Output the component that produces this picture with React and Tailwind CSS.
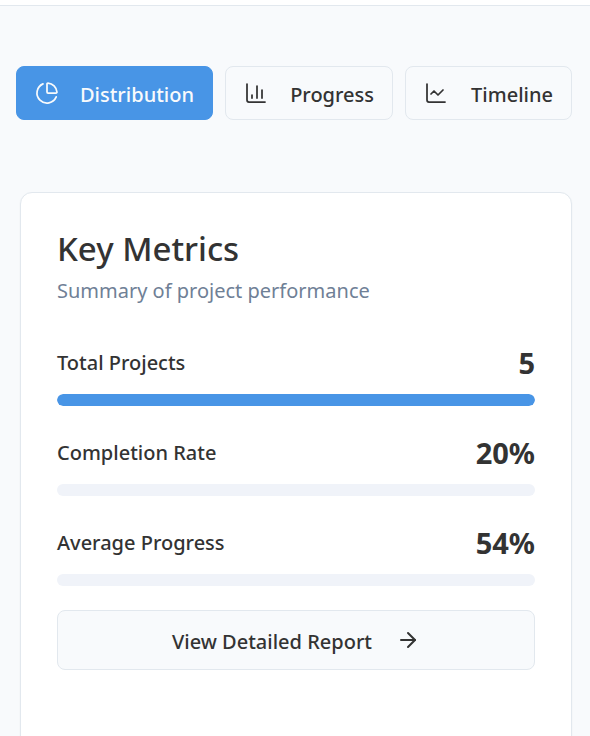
import { ArrowRight, ChartColumn, ChartLine, ChartPie } from "lucide-react";

const tabs = [
  { name: "Distribution", Icon: ChartPie, active: true },
  { name: "Progress", Icon: ChartColumn, active: false },
  { name: "Timeline", Icon: ChartLine, active: false },
];

const metrics = [
  { label: "Total Projects", value: "5", fill: 100 },
  { label: "Completion Rate", value: "20%", fill: 0 },
  { label: "Average Progress", value: "54%", fill: 0 },
];

function Tab({ name, Icon, active }) {
  const tone = active
    ? "border-[#4895e6] bg-[#4895e6] text-[#f8fafc]"
    : "border-[#e2e8ee] bg-[#f8fafc] text-[#333333]";
  return (
    <button
      type="button"
      aria-pressed={active}
      className={`flex h-[54px] items-center justify-between rounded-lg border px-[18px] text-xl font-medium ${tone}`}
    >
      <Icon size={24} strokeWidth={1.75} className="shrink-0" />
      <span className="pt-1">{name}</span>
    </button>
  );
}

function Metric({ label, value, fill }) {
  return (
    <div>
      <div className="flex h-[42px] items-center justify-between">
        <span className="text-xl font-medium">{label}</span>
        <span className="text-[29px] leading-[42px] font-bold">{value}</span>
      </div>
      <div
        role="progressbar"
        aria-label={label}
        aria-valuenow={fill}
        className="mt-[10px] h-3 overflow-hidden rounded-full bg-[#f0f3f9]"
      >
        <div className="h-full rounded-full bg-[#4895e6]" style={{ width: `${fill}%` }} />
      </div>
    </div>
  );
}

export default function App() {
  return (
    <div className="h-screen overflow-hidden bg-[#f8fafc] font-['Noto_Sans','Open_Sans',sans-serif] text-[#333333]">
      <header className="h-1.5 border-b border-[#e2e8ee] bg-white" />
      <main className="pt-[60px] pr-[18px] pl-4">
        <nav aria-label="Charts" className="grid grid-cols-[197fr_168fr_167fr] gap-3">
          {tabs.map((tab) => (
            <Tab key={tab.name} {...tab} />
          ))}
        </nav>
        <section className="mt-[72px] ml-1 rounded-xl border border-[#e2e8ee] bg-white px-9 pt-9 pb-24 shadow-xs">
          <h2 className="text-[33px] leading-10 font-medium">Key Metrics</h2>
          <p className="mt-1.5 text-xl leading-8 text-[#6f8096]">Summary of project performance</p>
          <div className="mt-[35px] flex flex-col gap-[26px]">
            {metrics.map((metric) => (
              <Metric key={metric.label} {...metric} />
            ))}
          </div>
          <button
            type="button"
            className="mt-6 flex h-[60px] w-full items-center justify-center gap-6 rounded-lg border border-[#e2e8ee] bg-[#f8fafc] text-xl font-medium"
          >
            <span className="pt-1">View Detailed Report</span>
            <ArrowRight size={24} strokeWidth={2} />
          </button>
        </section>
      </main>
    </div>
  );
}
